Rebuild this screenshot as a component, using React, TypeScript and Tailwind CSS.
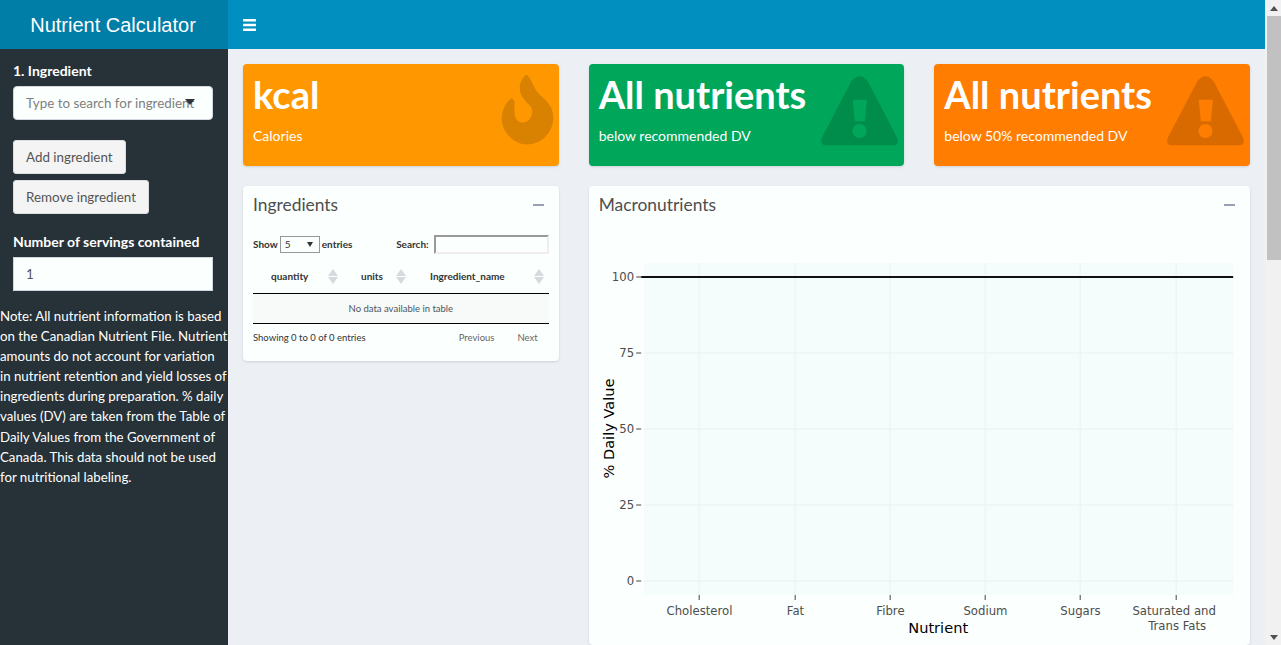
import React from "react";

const sans = "font-['Lato','Noto_Sans',sans-serif]";

const noteLines = [
  "Note: All nutrient information is based",
  "on the Canadian Nutrient File. Nutrient",
  "amounts do not account for variation",
  "in nutrient retention and yield losses of",
  "ingredients during preparation. % daily",
  "values (DV) are taken from the Table of",
  "Daily Values from the Government of",
  "Canada. This data should not be used",
  "for nutritional labeling.",
];

function Fire() {
  return (
    <svg viewBox="30 25 165 218" className="h-[73px] w-[55px]" fill="currentColor">
      <path d="M110 29C96 38 86 58 90 78C93 98 108 110 121 124C130 136 128 150 118 163C108 175 90 177 80 165C72 153 72 132 74 116C75 108 70 100 64 100C50 110 37 130 35 160C35 200 70 240 112 239C158 238 190 200 190 158C190 125 168 105 148 88C132 74 124 40 110 29Z" />
    </svg>
  );
}

function Warn() {
  return (
    <svg viewBox="692 44 236 212" className="h-[71px] w-[79px]" fill="currentColor" fillRule="evenodd">
      <path d="M786 62Q810 34 834 62L920 226Q934 254 906 254L714 254Q686 254 700 226ZM790 118H832L826 182H796ZM810 190A21 21 0 1 0 810.01 232A21 21 0 1 0 810 190Z" />
    </svg>
  );
}

function ValueBox({ title, sub, bg, icon, iconPos }: { title: string; sub: string; bg: string; icon: React.ReactNode; iconPos: string }) {
  return (
    <div className={`relative h-[102px] rounded-sm px-[10px] pt-[9px] text-white shadow-sm ${bg}`}>
      <div className="text-[38px] font-bold leading-[42px] whitespace-nowrap">{title}</div>
      <div className="mt-[11px] text-[14px] leading-[20px]">{sub}</div>
      <div className={`absolute text-black/15 ${iconPos}`}>{icon}</div>
    </div>
  );
}

function SortArrows() {
  return (
    <span className="flex flex-col gap-[1px]">
      <span className="h-0 w-0 border-x-[5px] border-b-[7px] border-x-transparent border-b-[#d6d9de]" />
      <span className="h-0 w-0 border-x-[5px] border-t-[7px] border-x-transparent border-t-[#d6d9de]" />
    </span>
  );
}

function BoxHeader({ title }: { title: string }) {
  return (
    <div className="flex h-[38px] items-center justify-between px-[10px]">
      <h3 className="text-[17.4px] leading-[20px] text-[#4e4e4e]">{title}</h3>
      <span className="mr-[5px] h-[2px] w-[11px] bg-[#97a0b3]" />
    </div>
  );
}

function Chart() {
  const xs = [
    { x: 699, l: ["Cholesterol"] },
    { x: 795, l: ["Fat"] },
    { x: 890, l: ["Fibre"] },
    { x: 985, l: ["Sodium"] },
    { x: 1080, l: ["Sugars"] },
    { x: 1176, l: ["Saturated and", "Trans Fats"] },
  ];
  const ys = [
    { y: 277, l: "100" },
    { y: 353, l: "75" },
    { y: 429, l: "50" },
    { y: 505, l: "25" },
    { y: 581, l: "0" },
  ];
  return (
    <svg viewBox="589 224 661 421" className="block h-[421px] w-full" style={{ fontFamily: "'DejaVu Sans', sans-serif" }}>
      <rect x="644" y="263" width="589" height="332" fill="#f4fdfc" />
      {xs.map((t) => (
        <line key={t.x} x1={t.x} x2={t.x} y1="263" y2="595" stroke="#eef3f4" strokeWidth="1.3" />
      ))}
      {ys.map((t) => (
        <line key={t.y} x1="644" x2="1233" y1={t.y} y2={t.y} stroke="#eef3f4" strokeWidth="1.3" />
      ))}
      <line x1="641" x2="1233" y1="277" y2="277" stroke="#111" strokeWidth="2" />
      {ys.map((t) => (
        <g key={t.l}>
          <line x1="636" x2="641" y1={t.y} y2={t.y} stroke="#444" strokeWidth="1" />
          <text x="634" y={t.y + 4} textAnchor="end" fontSize="11.7" fill="#4d4d4d">
            {t.l}
          </text>
        </g>
      ))}
      {xs.map((t, n) => (
        <g key={t.x}>
          <line x1={t.x} x2={t.x} y1="595" y2="600" stroke="#444" strokeWidth="1" />
          {t.l.map((s, i) => (
            <text key={s} x={t.x + (n === 5 ? (i === 0 ? -2 : 1) : 0.3)} y={615 + i * 15} textAnchor="middle" fontSize="11.7" fill="#4d4d4d">
              {s}
            </text>
          ))}
        </g>
      ))}
      <text x="938" y="633" textAnchor="middle" fontSize="14.6" fill="#000">
        Nutrient
      </text>
      <text transform="translate(614 428.5) rotate(-90)" textAnchor="middle" fontSize="14.6" fill="#000">
        % Daily Value
      </text>
    </svg>
  );
}

export default function App() {
  return (
    <div className={`flex h-[645px] w-full overflow-hidden bg-[#ecf0f5] text-[13.4px] text-[#333] ${sans}`}>
      <div className="flex min-w-0 flex-1 flex-col">
        <header className="flex h-[49px] shrink-0 bg-[#008fbe]">
          <div className="flex w-[228px] shrink-0 items-center justify-center bg-[#007ea7] pr-[2px] font-['Liberation_Sans',sans-serif] text-[20px] text-white">
            Nutrient Calculator
          </div>
          <div className="flex items-center pl-[15px] text-white">
            <svg viewBox="0 0 13 12" className="h-[12px] w-[13px]" fill="currentColor">
              <rect y="0" width="13" height="2.6" rx="0.4" />
              <rect y="4.7" width="13" height="2.6" rx="0.4" />
              <rect y="9.4" width="13" height="2.6" rx="0.4" />
            </svg>
          </div>
        </header>
        <div className="flex min-h-0 flex-1">
          <aside className="w-[228px] shrink-0 overflow-hidden bg-[#263238] text-white">
            <div className="px-[13px] pt-[12px]">
              <label className="block text-[14px] font-bold leading-[20px]">1. Ingredient</label>
              <div className="relative mt-[5px] flex h-[34px] w-[200px] items-center rounded-[4px] border border-[#d2d6de] bg-[#fbfffe] pl-[12px] whitespace-nowrap text-[#808080]">
                Type to search for ingredient
                <span className="absolute right-[17px] top-[12px] h-0 w-0 border-x-[5px] border-t-[6px] border-x-transparent border-t-[#333]" />
              </div>
              <button className="mt-[20px] block h-[34px] rounded-[3px] border border-[#ddd] bg-[#f4f4f4] px-[12px] text-[#555]">
                Add ingredient
              </button>
              <button className="mt-[6px] block h-[34px] rounded-[3px] border border-[#ddd] bg-[#f4f4f4] px-[12px] text-[#555]">
                Remove ingredient
              </button>
              <label className="mt-[18px] block text-[14px] font-bold leading-[20px]">Number of servings contained</label>
              <div className="mt-[5px] flex h-[34px] w-[200px] items-center border border-[#d2d6de] bg-[#fbfffe] pl-[12px] text-[#555]">1</div>
            </div>
            <p className="mt-[15px] text-[13.25px] leading-[20.1px] whitespace-nowrap">
              {noteLines.map((l) => (
                <span key={l} className="block">
                  {l}
                </span>
              ))}
            </p>
          </aside>
          <main className="min-w-0 flex-1 overflow-hidden px-[15px] pt-[15px]">
            <div className="grid grid-cols-3 gap-x-[30px]">
              <ValueBox title="kcal" sub="Calories" bg="bg-[#ff9800]" icon={<Fire />} iconPos="right-[4px] top-[9px]" />
              <ValueBox title="All nutrients" sub="below recommended DV" bg="bg-[#00a65a]" icon={<Warn />} iconPos="right-[5px] top-[11px]" />
              <ValueBox title="All nutrients" sub="below 50% recommended DV" bg="bg-[#ff7d00]" icon={<Warn />} iconPos="right-[5px] top-[11px]" />
            </div>
            <div className="mt-[20px] grid grid-cols-3 items-start gap-x-[30px]">
              <section className="h-[175px] rounded-sm bg-[#fbfffe] shadow-sm">
                <BoxHeader title="Ingredients" />
                <div className="px-[10px] pt-[10px] text-[10px] text-[#333]">
                  <div className="flex h-[20px] items-center justify-between font-bold">
                    <div className="flex items-center gap-[2px]">
                      Show
                      <span className="flex h-[17px] w-[40px] items-center justify-between border border-[#999] px-[4px] font-normal">
                        5<span className="mr-[2px] h-0 w-0 border-x-[3px] border-t-[5px] border-x-transparent border-t-[#333]" />
                      </span>
                      entries
                    </div>
                    <div className="flex items-center gap-[5px]">
                      Search:
                      <span className="h-[19px] w-[115px] border-2 border-[#f0ecf0] border-t-[#999] border-l-[#999]" />
                    </div>
                  </div>
                  <div className="mt-[7px] flex h-[33px] items-center border-b border-black pb-[2px] font-bold">
                    <div className="flex w-[90px] items-center justify-between pl-[18px] pr-[5px]">quantity<SortArrows /></div>
                    <div className="flex w-[68px] items-center justify-between pl-[18px] pr-[5px]">units<SortArrows /></div>
                    <div className="flex flex-1 items-center justify-between pl-[19px] pr-[5px]">Ingredient_name<SortArrows /></div>
                  </div>
                  <div className="flex h-[30px] items-center justify-center border-b border-black bg-[#f7faf9] pt-[2px] text-[9.5px] text-[#4a5560]">No data available in table</div>
                  <div className="flex items-center justify-between pt-[7px] text-[9.5px]">
                    <span>Showing 0 to 0 of 0 entries</span>
                    <span className="flex gap-[23px] pr-[11px] text-[#666]">
                      <span>Previous</span>
                      <span>Next</span>
                    </span>
                  </div>
                </div>
              </section>
              <section className="col-span-2 rounded-sm bg-[#fbfffe] shadow-sm">
                <BoxHeader title="Macronutrients" />
                <Chart />
              </section>
            </div>
          </main>
        </div>
      </div>
      <div className="flex w-[16px] shrink-0 flex-col bg-[#f1f1f1] pl-[2px]">
        <div className="flex h-[16px] shrink-0 items-center justify-center">
          <span className="h-0 w-0 border-x-[4px] border-b-[5px] border-x-transparent border-b-[#505050]" />
        </div>
        <div className="h-[244px] shrink-0 bg-[#c1c1c1]" />
        <div className="flex-1" />
        <div className="flex h-[16px] shrink-0 items-center justify-center">
          <span className="h-0 w-0 border-x-[4px] border-t-[5px] border-x-transparent border-t-[#505050]" />
        </div>
      </div>
    </div>
  );
}
